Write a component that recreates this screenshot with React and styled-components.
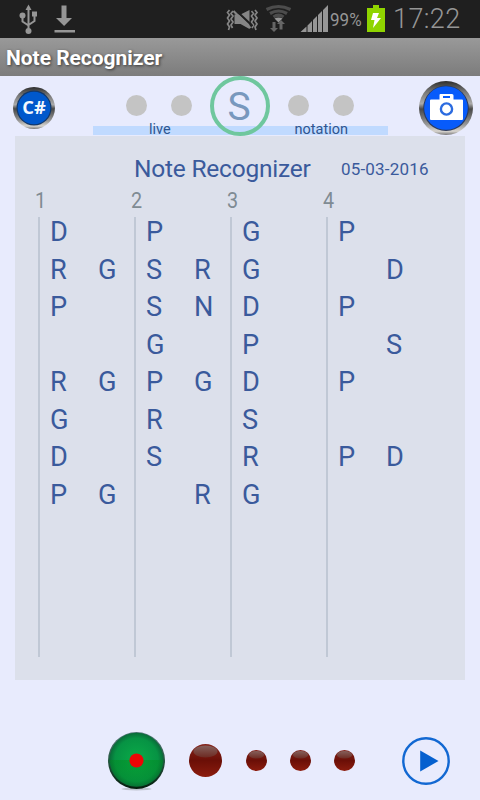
import React from "react";
import styled, { createGlobalStyle } from "styled-components";

const Global = createGlobalStyle`
  * { box-sizing: border-box; }
  body { margin: 0; background: #e8ebfd; font-family: Roboto, "Noto Sans", sans-serif; }
  svg { display: block; flex: none; }
`;

const Screen = styled.div`
  width: 480px;
  height: 800px;
  display: flex;
  flex-direction: column;
  background: #e8ebfd;
  overflow: hidden;
`;

const StatusBar = styled.header`
  height: 38px;
  flex: none;
  display: flex;
  align-items: center;
  justify-content: space-between;
  padding: 0 19px 0 19px;
  background: #1f1f1f;
  color: #969696;
`;

const StatusGroup = styled.div`
  display: flex;
  align-items: center;
  height: 38px;
`;

const Battery = styled.span`
  width: 37px;
  font-size: 18.5px;
  line-height: 38px;
  padding-top: 1px;
  white-space: nowrap;
  span { display: inline-block; transform: scaleX(0.92); transform-origin: left; }
`;

const Clock = styled.span`
  width: 68px;
  font-size: 27px;
  font-weight: 300;
  line-height: 38px;
  letter-spacing: 0.4px;
  white-space: nowrap;
`;

const TitleBar = styled.h1`
  height: 38px;
  flex: none;
  margin: 0;
  padding-left: 6px;
  background: linear-gradient(#999, #7c7c7c);
  color: #fff;
  font-size: 21px;
  font-weight: 700;
  line-height: 40px;
  letter-spacing: -0.04px;
  text-shadow: 1px 1px 3px rgba(0, 0, 0, 0.6);
`;

const Toolbar = styled.div`
  height: 60px;
  flex: none;
  display: flex;
  justify-content: space-between;
  padding: 0 6px 0 12px;
`;

const ToolButton = styled.button`
  display: flex;
  align-items: flex-start;
  border: 0;
  padding: ${(p) => p.$top}px 0 0;
  background: none;
  width: ${(p) => p.$w}px;
  height: 60px;
`;

const Tuner = styled.div`
  width: 295px;
  height: 60px;
  display: grid;
  margin-left: 7px;
  > * { grid-area: 1 / 1; }
`;

const ModeBar = styled.div`
  align-self: end;
  height: 9px;
  margin-bottom: 1px;
  background: #c0daff;
  display: flex;
  justify-content: space-between;
  align-items: flex-end;
  padding: 0 40px 0 56px;
  color: #2e5590;
  font-size: 14.5px;
  line-height: 11px;
`;

const Dots = styled.div`
  display: flex;
  align-items: center;
  height: 59px;
  padding-left: 33px;
`;

const Dot = styled.i`
  width: 21px;
  height: 21px;
  border-radius: 50%;
  background: #c4c4c4;
  margin-right: ${(p) => p.$gap}px;
`;

const NoteRing = styled.div`
  width: 60px;
  height: 60px;
  flex: none;
  margin-right: 18.5px;
  border: 4px solid #6fc79e;
  border-radius: 50%;
  color: #7898bd;
  font-size: 39px;
  line-height: 54px;
  text-align: center;
  text-indent: -1px;
`;

const Sheet = styled.main`
  width: 450px;
  height: 544px;
  flex: none;
  margin-left: 15px;
  padding: 16px 0 0 23px;
  background: #dce0eb;
`;

const SheetHead = styled.div`
  display: flex;
  height: 34px;
  padding-left: 96px;
  color: #3a5a9c;
  white-space: nowrap;
`;

const SheetTitle = styled.h2`
  width: 207px;
  margin: 0;
  font-size: 24.5px;
  font-weight: 400;
  line-height: 34px;
  letter-spacing: -0.22px;
`;

const SheetDate = styled.time`
  font-size: 17px;
  line-height: 35px;
  letter-spacing: 0.18px;
`;

const Columns = styled.div`
  display: grid;
  grid-template-columns: repeat(4, 96px);
`;

const ColumnNumber = styled.div`
  height: 31px;
  margin-left: -3px;
  color: #7f8b93;
  font-size: 21.5px;
  line-height: 29px;
  span { display: inline-block; transform: scaleX(0.92); transform-origin: left; }
`;

const Notes = styled.div`
  height: 440px;
  border-left: 2px solid #c0c8d5;
  padding-left: 10px;
  display: grid;
  grid-template-columns: 48px 38px;
  grid-auto-rows: 37.5px;
  color: #3a5a9c;
  font-size: 27.2px;
  line-height: 31px;
`;

const Controls = styled.footer`
  height: 120px;
  display: flex;
  align-items: center;
  padding: 42px 0 0 107px;
`;

const Slot = styled.div`
  margin-right: ${(p) => p.$gap}px;
  padding-bottom: ${(p) => p.$lift || 0}px;
`;

const columns = [
  ["D ", "RG", "P ", "  ", "RG", "G ", "D ", "PG"],
  ["P ", "SR", "SN", "G ", "PG", "R ", "S ", " R"],
  ["G ", "G ", "D ", "P ", "D ", "S ", "R ", "G "],
  ["P ", " D", "P ", " S", "P ", "  ", "PD", "  "],
];

const UsbIcon = () => (
  <svg width="20" height="32" viewBox="0 0 20 32" fill="none" stroke="#969696" strokeWidth="2">
    <path d="M9.500 6v22M3.500 12v6.500l6 4M15.500 11v7l-6 4" />
    <path d="M9.500 1.500l3 5.500h-6z" fill="#969696" stroke="none" />
    <circle cx="3.500" cy="12.500" r="3" fill="#969696" stroke="none" />
    <rect x="13" y="8.500" width="5" height="5" fill="#969696" stroke="none" />
    <circle cx="9.500" cy="28" r="3" fill="#969696" stroke="none" />
  </svg>
);

const DownloadIcon = () => (
  <svg width="21" height="38" viewBox="0 0 21 38" fill="#969696">
    <path d="M7.500 5.500h5V18H18l-7.900 8L2 18h5.500zM.5 30H21v2.500H.5z" />
  </svg>
);

const VibrateIcon = () => (
  <svg width="33" height="38" viewBox="0 0 33 38" fill="none" stroke="#858585" strokeWidth="1.700">
    <path d="M3.500 10L1.500 12.500 3.500 15 1.500 18 3.500 21 1.500 24 3.500 27 2.500 30M7 11L5 13.500 7 16 5 19 7 22 5 25 6.500 28M29 10l2 2.500-2 2.500 2 3-2 3 2 3-2 3 1 3M25.500 11l2 2.500-2 2.500 2 3-2 3 2 3-1.500 3" />
    <path d="M8.500 14.500h6l9-4.500v19l-9-5h-6z" fill="#858585" stroke="none" />
    <path d="M9.500 10l17 16" stroke="#1f1f1f" strokeWidth="2" />
    <path d="M7.500 11l17 17" strokeWidth="2.200" />
  </svg>
);

const WifiIcon = () => (
  <svg width="27" height="38" viewBox="0 0 27 38" fill="none" stroke="#4c4c4c" strokeWidth="3.200">
    <path d="M1.500 9.500q12-6 24 0M5 13.500q8.500-5 17 0M8.500 17q5-3.500 10 0" />
    <path d="M9.500 18.500q4-2 8 0L13.500 22.500z" fill="#969696" stroke="none" />
    <path d="M7.500 22h3v6H13l-4 4-4-4h2.500zM14.500 29.500V24H12l4-4 4 4h-2.500v5.500z" fill="#666" stroke="none" />
  </svg>
);

const SignalIcon = () => (
  <svg width="29" height="38" viewBox="0 0 29 38" fill="#969696">
    <path d="M.5 32L6.500 26.500V32zM7.500 25.500L12 21v11H7.500zM13 20L17 16v16h-4zM18 15L22 11v21h-4zM23 10l5-5v27h-5z" />
  </svg>
);

const BatteryIcon = () => (
  <svg width="18" height="38" viewBox="0 0 18 38">
    <path d="M0 8h6V5h6v3h6v24H0z" fill="#8fd400" />
    <path d="M6 13h6l-2 5h4L6 28l1.500-8H4z" fill="#fff" />
  </svg>
);

const Chrome = ({ id }) => (
  <defs>
    <linearGradient id={id} x1="0" y1="0" x2="0" y2="1">
      <stop offset="0" stopColor="#2d2d2d" />
      <stop offset=".2" stopColor="#777" />
      <stop offset=".42" stopColor="#aaa" />
      <stop offset=".52" stopColor="#484848" />
      <stop offset=".8" stopColor="#969696" />
      <stop offset=".93" stopColor="#d8d5cf" />
      <stop offset="1" stopColor="#777" />
    </linearGradient>
  </defs>
);

const SharpIcon = () => (
  <svg width="44" height="44" viewBox="0 0 44 44">
    <Chrome id="chromeA" />
    <circle cx="22" cy="22" r="21" fill="url(#chromeA)" />
    <circle cx="22" cy="22" r="17.500" fill="#123769" />
    <circle cx="22" cy="22" r="16.300" fill="#0058cc" />
    <text x="22" y="28" textAnchor="middle" fill="#f4f8ff" fontFamily="Open Sans" fontWeight="700" fontSize="17" textLength="23.500" lengthAdjust="spacingAndGlyphs">C#</text>
  </svg>
);

const CameraIcon = () => (
  <svg width="56" height="56" viewBox="0 0 56 56">
    <Chrome id="chromeB" />
    <circle cx="28" cy="28" r="27" fill="url(#chromeB)" />
    <circle cx="28" cy="28.300" r="22.800" fill="#2c3a5c" />
    <circle cx="28" cy="28" r="21.800" fill="#075bfb" />
    <path d="M13 19.500h8.500V15q0-1 1-1H34q1.500 0 1.500 1.500v4H44q1 0 1 1V39q0 1-1 1H13q-1 0-1-1V20.500q0-1 1-1z" fill="#fff" />
    <path d="M25 16h7v2h-7z" fill="#075bfb" />
    <circle cx="28.500" cy="29" r="5.600" fill="#fff" stroke="#2b6be0" strokeWidth="2.400" />
  </svg>
);

const RecordIcon = () => (
  <svg width="59" height="60" viewBox="0 0 59 60">
    <defs>
      <radialGradient id="green" cx=".5" cy=".5" r=".5">
        <stop offset="0" stopColor="#0aab48" />
        <stop offset=".8" stopColor="#079344" />
        <stop offset="1" stopColor="#096b39" />
      </radialGradient>
      <linearGradient id="rim" x1="0" y1="0" x2="0" y2="1">
        <stop offset="0" stopColor="#597b7d" />
        <stop offset=".5" stopColor="#26563f" />
        <stop offset="1" stopColor="#041d0c" />
      </linearGradient>
      <linearGradient id="shade" x1="0" y1="0" x2="0" y2="1">
        <stop offset="0" stopColor="#008a18" stopOpacity=".4" />
        <stop offset="1" stopColor="#008a18" stopOpacity=".2" />
      </linearGradient>
    </defs>
    <ellipse cx="29.500" cy="58" rx="15" ry="1.500" fill="#bfc3ce" />
    <circle cx="29.500" cy="29.500" r="28.500" fill="url(#rim)" />
    <circle cx="29.500" cy="28.800" r="27" fill="url(#green)" />
    <path d="M3 29a26.500 26.500 0 0053 0z" fill="url(#shade)" />
    <circle cx="29.500" cy="29.500" r="7" fill="#ed0505" />
  </svg>
);

const Lamp = ({ size }) => (
  <svg width={size} height={size} viewBox="0 0 33 33">
    <defs>
      <linearGradient id={`lamp${size}`} x1="0" y1="0" x2="0" y2="1">
        <stop offset="0" stopColor="#85251c" />
        <stop offset=".5" stopColor="#6b0f07" />
        <stop offset="1" stopColor="#8c1c0e" />
      </linearGradient>
      <linearGradient id={`gloss${size}`} x1="0" y1="0" x2="0" y2="1">
        <stop offset="0" stopColor="#85605b" />
        <stop offset="1" stopColor="#6d2a22" />
      </linearGradient>
    </defs>
    <circle cx="16.500" cy="16.500" r="16.500" fill={`url(#lamp${size})`} />
    <ellipse cx="16.500" cy="7.500" rx="12" ry="6" fill={`url(#gloss${size})`} />
  </svg>
);

const PlayIcon = () => (
  <svg width="48" height="48" viewBox="0 0 48 48">
    <circle cx="24" cy="24" r="22.700" fill="none" stroke="#1268d2" strokeWidth="2.400" />
    <path d="M18.200 13.500L36.500 24 18.200 34.500z" fill="#0560cf" />
  </svg>
);

export default function App() {
  return (
    <Screen>
      <Global />
      <StatusBar>
        <StatusGroup>
          <UsbIcon />
          <Slot $gap={15} />
          <DownloadIcon />
        </StatusGroup>
        <StatusGroup>
          <VibrateIcon />
          <Slot $gap={6} />
          <WifiIcon />
          <Slot $gap={8} />
          <SignalIcon />
          <Slot $gap={1} />
          <Battery><span>99%</span></Battery>
          <BatteryIcon />
          <Slot $gap={8} />
          <Clock>17:22</Clock>
        </StatusGroup>
      </StatusBar>
      <TitleBar>Note Recognizer</TitleBar>
      <Toolbar>
        <ToolButton $w={44} $top={10}><SharpIcon /></ToolButton>
        <Tuner>
          <ModeBar><span>live</span><span>notation</span></ModeBar>
          <Dots>
            <Dot $gap={23.5} />
            <Dot $gap={18} />
            <NoteRing>S</NoteRing>
            <Dot $gap={23.5} />
            <Dot $gap={0} />
          </Dots>
        </Tuner>
        <ToolButton $w={56} $top={4}><CameraIcon /></ToolButton>
      </Toolbar>
      <Sheet>
        <SheetHead>
          <SheetTitle>Note Recognizer</SheetTitle>
          <SheetDate>05-03-2016</SheetDate>
        </SheetHead>
        <Columns>
          {columns.map((rows, i) => (
            <div key={i}>
              <ColumnNumber><span>{i + 1}</span></ColumnNumber>
              <Notes>
                {rows.flatMap((row, r) => [...row].map((n, c) => <span key={`${r}-${c}`}>{n}</span>))}
              </Notes>
            </div>
          ))}
        </Columns>
      </Sheet>
      <Controls>
        <Slot $gap={23}><RecordIcon /></Slot>
        <Slot $gap={24} $lift={2}><Lamp size={33} /></Slot>
        <Slot $gap={23} $lift={2}><Lamp size={21} /></Slot>
        <Slot $gap={23} $lift={2}><Lamp size={21} /></Slot>
        <Slot $gap={47} $lift={2}><Lamp size={21} /></Slot>
        <PlayIcon />
      </Controls>
    </Screen>
  );
}
